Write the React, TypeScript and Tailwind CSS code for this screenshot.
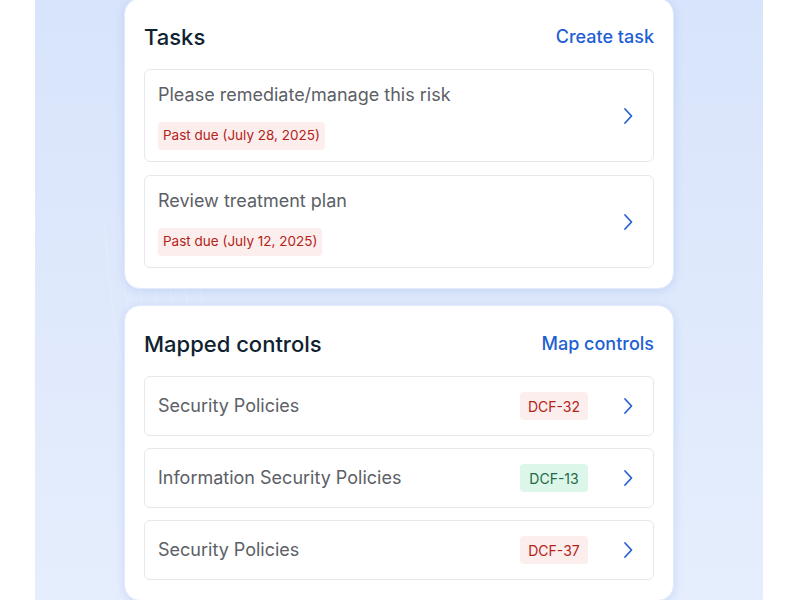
const tasks = [
  { title: "Please remediate/manage this risk", due: "Past due (July 28, 2025)" },
  { title: "Review treatment plan", due: "Past due (July 12, 2025)" },
];

const controls = [
  { name: "Security Policies", code: "DCF-32", ok: false },
  { name: "Information Security Policies", code: "DCF-13", ok: true },
  { name: "Security Policies", code: "DCF-37", ok: false },
];

function Chevron() {
  return (
    <svg width="12" height="18" viewBox="0 0 12 18" fill="none" className="shrink-0">
      <path d="M3 2l6.5 7L3 16" stroke="#2563d6" strokeWidth="1.8" strokeLinecap="round" strokeLinejoin="round" />
    </svg>
  );
}

function CardHeader({ title, action }: { title: string; action: string }) {
  return (
    <div className="flex items-center justify-between mb-[18px]">
      <h2 className="text-[22px] leading-7 font-medium text-[#0f2230]">{title}</h2>
      <button className="text-[18px] leading-7 font-medium text-[#1f5fd3]">{action}</button>
    </div>
  );
}

export default function App() {
  return (
    <div
      className="w-full h-[600px] bg-white flex justify-center overflow-hidden"
      style={{ fontFamily: "Inter, 'Noto Sans', sans-serif" }}
    >
      <div className="relative w-[728px] h-full -translate-x-px bg-gradient-to-b from-[#d8e4fb] to-[#e6eefd]">
        {/* faint background arcs */}
        <svg className="absolute inset-0 w-full h-full" viewBox="0 0 728 600" fill="none">
          {[0, 1, 2, 3, 4, 5, 6].map((i) => (
            <path
              key={i}
              d={`M${70 + i * 14} 220 Q ${80 + i * 16} 460, ${200 + i * 30} 640`}
              stroke="#ffffff"
              strokeOpacity={0.18}
              strokeWidth={1}
            />
          ))}
        </svg>

        <div className="relative flex flex-col items-center gap-4 -mt-[2px]">
          {/* Tasks card */}
          <section className="w-[550px] bg-white rounded-2xl border border-[#e3ebfb] shadow-[0_2px_10px_rgba(80,120,220,0.18)] px-[19px] pt-6 pb-5">
            <CardHeader title="Tasks" action="Create task" />
            <div className="flex flex-col gap-[13px]">
              {tasks.map((t) => (
                <div
                  key={t.title}
                  className="h-[93px] border border-[#e6e8ec] rounded-md pl-[13px] pr-[19px] flex items-center justify-between"
                >
                  <div className="flex flex-col items-start pt-[1px]">
                    <span className="text-[18px] leading-6 text-[#5c6066]">{t.title}</span>
                    <span className="mt-[15px] h-7 px-[5px] flex items-center rounded bg-[#fdeeee] text-[13.5px] text-[#b42318]">
                      {t.due}
                    </span>
                  </div>
                  <Chevron />
                </div>
              ))}
            </div>
          </section>

          {/* Mapped controls card */}
          <section className="w-[550px] bg-white rounded-2xl border border-[#e3ebfb] shadow-[0_2px_10px_rgba(80,120,220,0.18)] px-[19px] pt-6 pb-5">
            <CardHeader title="Mapped controls" action="Map controls" />
            <div className="flex flex-col gap-3">
              {controls.map((c) => (
                <div
                  key={c.code}
                  className="h-[60px] border border-[#e6e8ec] rounded-md pl-[13px] pr-[19px] flex items-center"
                >
                  <span className="flex-1 text-[18px] leading-6 text-[#5c6066]">{c.name}</span>
                  <span
                    className={
                      c.ok
                        ? "w-[68px] h-7 flex items-center justify-center rounded bg-[#dcf6ea] text-[14px] text-[#1f6a45] mr-[34px]"
                        : "w-[68px] h-7 flex items-center justify-center rounded bg-[#fdeeee] text-[14px] text-[#b42318] mr-[34px]"
                    }
                  >
                    {c.code}
                  </span>
                  <Chevron />
                </div>
              ))}
            </div>
          </section>
        </div>
      </div>
    </div>
  );
}
